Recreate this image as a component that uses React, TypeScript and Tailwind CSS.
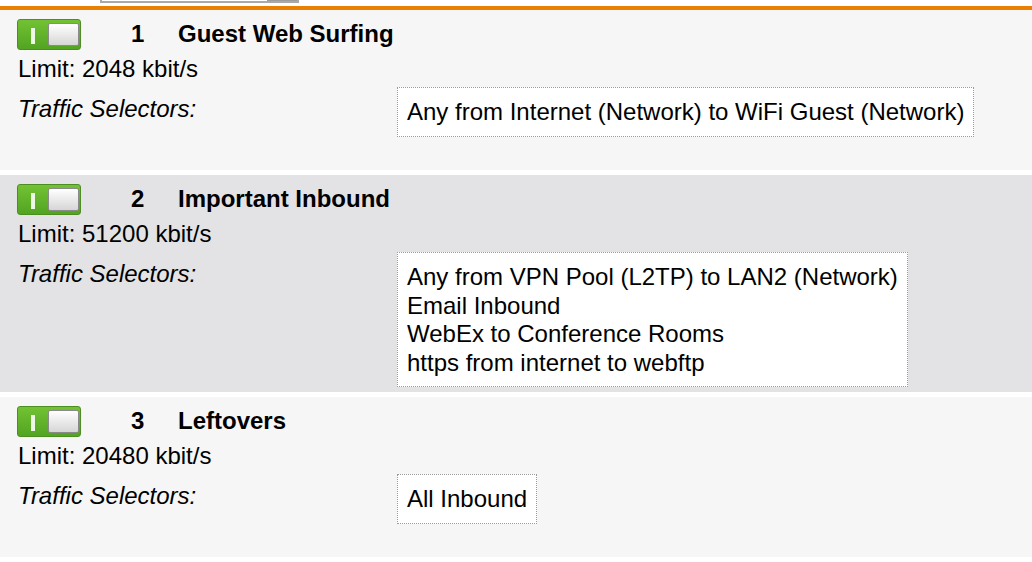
import React from 'react'

interface Rule {
  id: number
  name: string
  limit: number
  selectors: string[]
  tone: 'light' | 'dark'
}

const rules: Rule[] = [
  { id: 1, name: 'Guest Web Surfing', limit: 2048, selectors: ['Any from Internet (Network) to WiFi Guest (Network)'], tone: 'light' },
  {
    id: 2,
    name: 'Important Inbound',
    limit: 51200,
    selectors: [
      'Any from VPN Pool (L2TP) to LAN2 (Network)',
      'Email Inbound',
      'WebEx to Conference Rooms',
      'https from internet to webftp',
    ],
    tone: 'dark',
  },
  { id: 3, name: 'Leftovers', limit: 20480, selectors: ['All Inbound'], tone: 'light' },
]

function Toggle() {
  return (
    <div className="relative w-[64px] h-[31px] shrink-0 rounded-[3px] border border-[#4c8f20] bg-gradient-to-b from-[#73c234] to-[#52a421]">
      <div className="absolute left-[13px] top-[8px] w-[4px] h-[16px] bg-[#eef8e6]" />
      <div className="absolute left-[30px] top-[3px] w-[31px] h-[23px] rounded-[2px] border border-[#8a8a8a] bg-gradient-to-b from-[#ffffff] to-[#d6d6d6]" />
    </div>
  )
}

function RuleRow({ rule }: { rule: Rule }) {
  return (
    <div
      className={
        'min-h-[160px] pl-[17px] pt-[8px] pb-[5px] ' +
        (rule.tone === 'dark' ? 'bg-[#e3e3e5]' : 'bg-[#f6f6f6]')
      }
    >
      {/* header: switch, position, name */}
      <div className="flex items-center h-[32px]">
        <Toggle />
        <span className="ml-[50px] w-[47px] font-bold text-[24px] leading-[32px]">{rule.id}</span>
        <span className="font-bold text-[24px] leading-[32px]">{rule.name}</span>
      </div>
      <div className="mt-[5px] pl-px text-[24px] leading-[28px]">Limit: {rule.limit} kbit/s</div>
      <div className="flex mt-[4px]">
        <div className="w-[380px] pl-px pt-[8px] italic text-[24px] leading-[28px]">Traffic Selectors:</div>
        <div className="border border-dotted border-[#9a9a9a] bg-white px-[9px] pt-[10px] pb-[9px] text-[24px] leading-[28.5px]">
          {rule.selectors.map(s => (
            <div key={s}>{s}</div>
          ))}
        </div>
      </div>
    </div>
  )
}

export default function App() {
  return (
    <div
      className="w-[1032px] h-[562px] overflow-hidden bg-white text-black"
      style={{ fontFamily: '"Liberation Sans", Arial, Helvetica, sans-serif' }}
    >
      {/* bottom edge of the search box above */}
      <div className="ml-[100px] w-[199px] h-[3px] flex border-x-2 border-b-2 border-[#a9a9a9]">
        <div className="flex-1 bg-white" />
        <div className="w-[30px] bg-[#9c9c9c]" />
      </div>
      <div className="h-[3px]" />
      <div className="h-[4px] bg-[#e98003]" />
      <div className="flex flex-col gap-[5px]">
        {rules.map(r => (
          <RuleRow key={r.id} rule={r} />
        ))}
      </div>
    </div>
  )
}
